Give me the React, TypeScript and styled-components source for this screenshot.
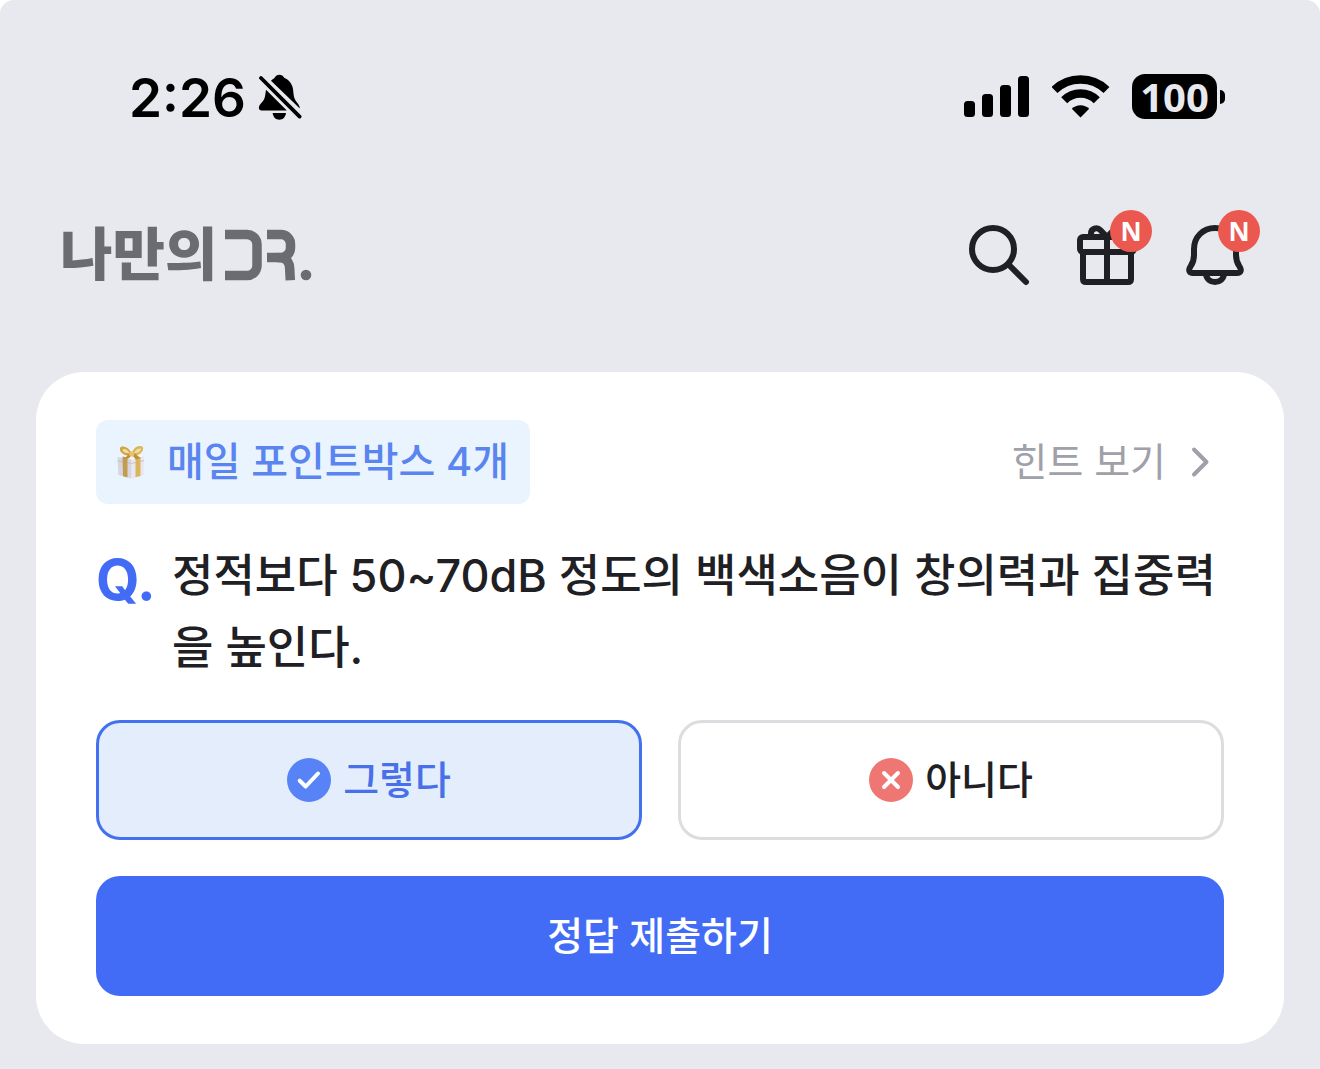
import React, { useState } from "react";
import styled, { createGlobalStyle } from "styled-components";

const GlobalStyle = createGlobalStyle`
  *, *::before, *::after { box-sizing: border-box; }
  body {
    margin: 0;
    background: #ffffff;
    font-family: Inter, "Noto Sans CJK KR", sans-serif;
    color: #1f2024;
  }
  button { font: inherit; border: 0; background: none; padding: 0; cursor: pointer; }
`;

const Page = styled.div`
  min-height: 100vh;
  background: #e8e9ee;
  border-radius: 14px 14px 0 0;
  padding-bottom: 24px;
`;

const StatusBar = styled.div`
  display: flex;
  align-items: center;
  justify-content: space-between;
  padding: 64px 95px 0 129px;
  color: #000000;
`;

const StatusGroup = styled.div<{ $gap: number }>`
  display: flex;
  align-items: center;
  gap: ${(p) => p.$gap}px;
  height: 65px;
`;

const Clock = styled.time`
  padding-top: 4px;
  font-size: 53px;
  font-weight: 600;
  line-height: 61px;
`;

const Battery = styled.div`
  display: flex;
  align-items: center;
  gap: 3px;
`;

const BatteryBody = styled.span`
  width: 85px;
  height: 45px;
  border-radius: 13px;
  background: #000000;
  color: #e8e9ee;
  font-family: "Open Sans", sans-serif;
  font-size: 40px;
  font-weight: 700;
  line-height: 45px;
  text-align: center;
`;

const BatteryTip = styled.span`
  width: 5px;
  height: 14px;
  border-radius: 0 7px 7px 0;
  background: #000000;
`;

const Header = styled.header`
  display: flex;
  align-items: center;
  justify-content: space-between;
  padding: 90px 69px 81px 60px;
`;

const Brand = styled.a`
  display: flex;
  align-items: center;
  gap: 8px;
  color: #6b6c72;
  font-size: 57px;
  font-weight: 900;
  line-height: 72px;
  text-decoration: none;
`;

const Actions = styled.nav`
  display: flex;
  gap: 36px;
`;

const IconButton = styled.button`
  position: relative;
  width: 72px;
  height: 72px;
  color: #1f2024;
  svg { display: block; }
`;

const Badge = styled.span`
  position: absolute;
  top: -9px;
  right: -9px;
  width: 42px;
  height: 42px;
  border-radius: 50%;
  background: #eb5850;
  color: #ffffff;
  font-family: "Open Sans", sans-serif;
  font-size: 26px;
  font-weight: 700;
  line-height: 42px;
  text-align: center;
`;

const Card = styled.main`
  margin: 0 36px;
  padding: 48px 60px;
  border-radius: 48px;
  background: #ffffff;
  display: flex;
  flex-direction: column;
  gap: 36px;
`;

const CardTop = styled.div`
  display: flex;
  align-items: center;
  justify-content: space-between;
`;

const PointChip = styled.div`
  display: flex;
  align-items: center;
  gap: 18px;
  height: 84px;
  padding: 0 21px 0 17px;
  border-radius: 12px;
  background: #eaf4fe;
  color: #5a85f0;
  font-size: 40px;
  font-weight: 500;
  line-height: 60px;
`;

const HintButton = styled.button`
  && {
    display: flex;
    align-items: center;
    gap: 24px;
    padding-right: 14px;
    color: #9fa0a8;
    font-size: 39px;
    font-weight: 400;
    line-height: 60px;
  }
`;

const Question = styled.div`
  display: flex;
  font-size: 45px;
  font-weight: 500;
  line-height: 72px;
`;

const QuestionMark = styled.span`
  flex: 0 0 76px;
  color: #426cf6;
  font-size: 56px;
  font-weight: 700;
  line-height: 80px;
`;

const QuestionText = styled.h1`
  flex: 1;
  min-width: 0;
  margin: 0;
  font-size: inherit;
  font-weight: inherit;
  word-break: break-all;
`;

const Form = styled.form`
  display: flex;
  flex-direction: column;
  gap: 36px;
`;

const Options = styled.div`
  display: grid;
  grid-template-columns: 1fr 1fr;
  gap: 36px;
`;

const Option = styled.label<{ $selected: boolean }>`
  display: flex;
  align-items: center;
  justify-content: center;
  gap: 12px;
  height: 120px;
  border: 3px solid ${(p) => (p.$selected ? "#4270ee" : "#dcdde1")};
  border-radius: 24px;
  background: ${(p) => (p.$selected ? "#e4edfc" : "#ffffff")};
  color: ${(p) => (p.$selected ? "#4870e8" : "#1f2024")};
  font-size: 39px;
  font-weight: 500;
  line-height: 60px;
  cursor: pointer;
`;

const HiddenRadio = styled.input`
  position: absolute;
  opacity: 0;
  pointer-events: none;
`;

const Submit = styled.button`
  && {
    height: 120px;
    border-radius: 24px;
    background: #426cf6;
    color: #ffffff;
    font-size: 39px;
    font-weight: 500;
    line-height: 60px;
  }
`;

const BellSlashIcon = () => (
  <svg width="44" height="48" viewBox="0 0 44 48" fill="currentColor" aria-hidden="true">
    <path d="M13 7.7C14.5 6.400 15.800 5.800 16.600 4.800C17.600 2.700 19.300 1.700 21.400 1.700C23.500 1.700 25.200 2.700 26.200 4.800C31.500 7 34.700 11.500 35.200 17.500C35.500 22 36 25.500 38 28.200C40 30.600 41.800 32.600 41.800 35.500Z" />
    <path d="M8 16.700L28.800 37.400H3.600C1.900 37.400 .9 36.400 .9 34.900C.9 31.600 4.500 29.500 6 26.500C7.200 24 7.400 20.500 8 16.700Z" />
    <path d="M14.600 40H28C27.400 44.200 25 46.700 21.300 46.700S15.200 44.200 14.600 40Z" />
    <path d="M3 5L41.600 43.600" stroke="currentColor" strokeWidth="3.800" strokeLinecap="round" />
  </svg>
);

const SignalIcon = () => (
  <svg width="66" height="41" viewBox="0 0 66 41" fill="currentColor" aria-hidden="true">
    <rect x="0" y="25" width="11" height="16" rx="3.500" />
    <rect x="18" y="18" width="11" height="23" rx="3.500" />
    <rect x="36" y="9" width="11" height="32" rx="3.500" />
    <rect x="54" y="0" width="11" height="41" rx="3.500" />
  </svg>
);

const WifiIcon = () => (
  <svg width="58" height="43" viewBox="0 0 58 43" fill="none" aria-hidden="true">
    <path d="M2.500 15A37.500 37.500 0 0 1 54.500 15" stroke="currentColor" strokeWidth="8.500" />
    <path d="M12.200 25.300A23 23 0 0 1 44.800 25.300" stroke="currentColor" strokeWidth="8.500" />
    <path d="M28.500 42.500L19.800 33.700A12.400 12.400 0 0 1 37.200 33.700Z" fill="currentColor" />
  </svg>
);

const DoctorMark = () => (
  <svg width="88" height="54" viewBox="0 0 88 54" fill="none" role="img" aria-label="DR.">
    <path d="M0 6.500H22A10 10 0 0 1 32 16.500V37.500A10 10 0 0 1 22 47.500H0" stroke="currentColor" strokeWidth="9.500" />
    <path d="M42 6.500H56A9.500 9.500 0 0 1 65.500 16V20A9.500 9.500 0 0 1 56 29.500H42" stroke="currentColor" strokeWidth="9.500" />
    <path d="M52 29.500C61 29.500 64.500 33 64.700 41L65.300 52.200" stroke="currentColor" strokeWidth="9.500" />
    <circle cx="81" cy="47" r="5.300" fill="currentColor" />
  </svg>
);

const SearchIcon = () => (
  <svg width="72" height="72" viewBox="0 0 72 72" fill="none" stroke="currentColor" strokeWidth="6" strokeLinecap="round" aria-hidden="true">
    <circle cx="30" cy="30" r="21" />
    <path d="M46 46L63 63" />
  </svg>
);

const GiftIcon = () => (
  <svg width="72" height="72" viewBox="0 0 72 72" fill="none" stroke="currentColor" strokeWidth="6" strokeLinejoin="round" aria-hidden="true">
    <rect x="9" y="18" width="54" height="15" rx="3" />
    <path d="M12 33V60Q12 63 15 63H57Q60 63 60 60V33M36 18V63" />
    <path d="M36 18L29.500 11.200C26 7.500 20 9.500 20 14.500V18M36 18L42.500 11.200C46 7.500 52 9.500 52 14.500V18" />
  </svg>
);

const BellIcon = () => (
  <svg width="72" height="72" viewBox="0 0 72 72" fill="none" stroke="currentColor" strokeWidth="6" strokeLinejoin="round" aria-hidden="true">
    <path d="M36 9C24 9 15 18 15 30V36C15 42.500 13.500 44.500 11.500 47.500C9 51 10.300 54 14 54H58C61.700 54 63 51 60.500 47.500C58.500 44.500 57 42.500 57 36V30C57 18 48 9 36 9Z" />
    <path d="M27 55C27.500 60 31.500 63 36 63S44.500 60 45 55" />
  </svg>
);

const PointBoxIcon = () => (
  <svg width="36" height="38" viewBox="0 0 36 38" aria-hidden="true">
    <path d="M4.500 14L18.500 16V35.500L5.500 32Z" fill="#d6d5e0" />
    <path d="M18.500 16L31 13.500L30.500 32L18.500 35.500Z" fill="#e9e6f0" />
    <path d="M4.500 13L18 10L31.500 12.500L18.500 16.500Z" fill="#f6f5fa" />
    <path d="M4.500 17.800L18.500 20.500L31 17.500" stroke="#bcbccb" strokeWidth="0.800" fill="none" />
    <path d="M9.500 13.500L14.500 14.500V34.500L10 33.300Z" fill="#c39d4e" />
    <path d="M22.500 15L27.500 14V32.900L22.500 34.300Z" fill="#d9b55c" />
    <path d="M17.500 13C12 13 6 9.500 7 5C8.500 2 15.500 3.500 18.500 10Z" fill="#d0a548" />
    <path d="M19 11C19.500 5 25 1.500 29.500 3.500C32 8 26 13 19.500 13Z" fill="#dcb453" />
    <path d="M9.500 6.500C12 5 15 7 16.500 10C13 10.500 10 9.500 9.500 6.500Z" fill="#f1dda0" />
    <path d="M21 10C23 6 26 4.800 28.500 5.800C27.500 9 24.500 10.500 21 10Z" fill="#f1dda0" />
    <path d="M16.500 10.500L11 16L15.500 15.500L19 12L23 16.500L27.500 15L21 10Z" fill="#bd9138" />
    <circle cx="18.700" cy="11" r="2.600" fill="#e6c269" />
  </svg>
);

const ChevronIcon = () => (
  <svg width="20" height="32" viewBox="0 0 20 32" fill="none" stroke="currentColor" strokeWidth="4" strokeLinecap="round" strokeLinejoin="round" aria-hidden="true">
    <path d="M4 3.500L16.500 16L4 28.500" />
  </svg>
);

const YesIcon = () => (
  <svg width="44" height="44" viewBox="0 0 44 44" fill="none" aria-hidden="true">
    <circle cx="22" cy="22" r="22" fill="#5783f6" />
    <path d="M12.700 22.700L18.700 28.500L31 15.500" stroke="#ffffff" strokeWidth="4" strokeLinecap="round" strokeLinejoin="round" />
  </svg>
);

const NoIcon = () => (
  <svg width="44" height="44" viewBox="0 0 44 44" fill="none" aria-hidden="true">
    <circle cx="22" cy="22" r="22" fill="#ef7773" />
    <path d="M15 15L29 29M29 15L15 29" stroke="#ffffff" strokeWidth="4" strokeLinecap="round" />
  </svg>
);

const answers = [
  { value: "yes", text: "그렇다", icon: <YesIcon /> },
  { value: "no", text: "아니다", icon: <NoIcon /> },
];

export default function App() {
  const [answer, setAnswer] = useState("yes");

  return (
    <>
      <GlobalStyle />
      <Page>
        <StatusBar>
          <StatusGroup $gap={12}>
            <Clock>2:26</Clock>
            <BellSlashIcon />
          </StatusGroup>
          <StatusGroup $gap={22}>
            <SignalIcon />
            <WifiIcon />
            <Battery>
              <BatteryBody>100</BatteryBody>
              <BatteryTip />
            </Battery>
          </StatusGroup>
        </StatusBar>

        <Header>
          <Brand href="#home">
            <span>나만의</span>
            <DoctorMark />
          </Brand>
          <Actions>
            <IconButton type="button" aria-label="검색">
              <SearchIcon />
            </IconButton>
            <IconButton type="button" aria-label="선물">
              <GiftIcon />
              <Badge>N</Badge>
            </IconButton>
            <IconButton type="button" aria-label="알림">
              <BellIcon />
              <Badge>N</Badge>
            </IconButton>
          </Actions>
        </Header>

        <Card>
          <CardTop>
            <PointChip>
              <PointBoxIcon />
              <span>매일 포인트박스 4개</span>
            </PointChip>
            <HintButton type="button">
              힌트 보기
              <ChevronIcon />
            </HintButton>
          </CardTop>

          <Question>
            <QuestionMark>Q.</QuestionMark>
            <QuestionText>
              정적보다 50~70dB 정도의 백색소음이 창의력과 집중력을 높인다.
            </QuestionText>
          </Question>

          <Form onSubmit={(e) => e.preventDefault()}>
            <Options role="radiogroup" aria-label="정답">
              {answers.map((a) => (
                <Option key={a.value} $selected={answer === a.value}>
                  <HiddenRadio
                    type="radio"
                    name="answer"
                    value={a.value}
                    checked={answer === a.value}
                    onChange={() => setAnswer(a.value)}
                  />
                  {a.icon}
                  <span>{a.text}</span>
                </Option>
              ))}
            </Options>
            <Submit type="submit">정답 제출하기</Submit>
          </Form>
        </Card>
      </Page>
    </>
  );
}
